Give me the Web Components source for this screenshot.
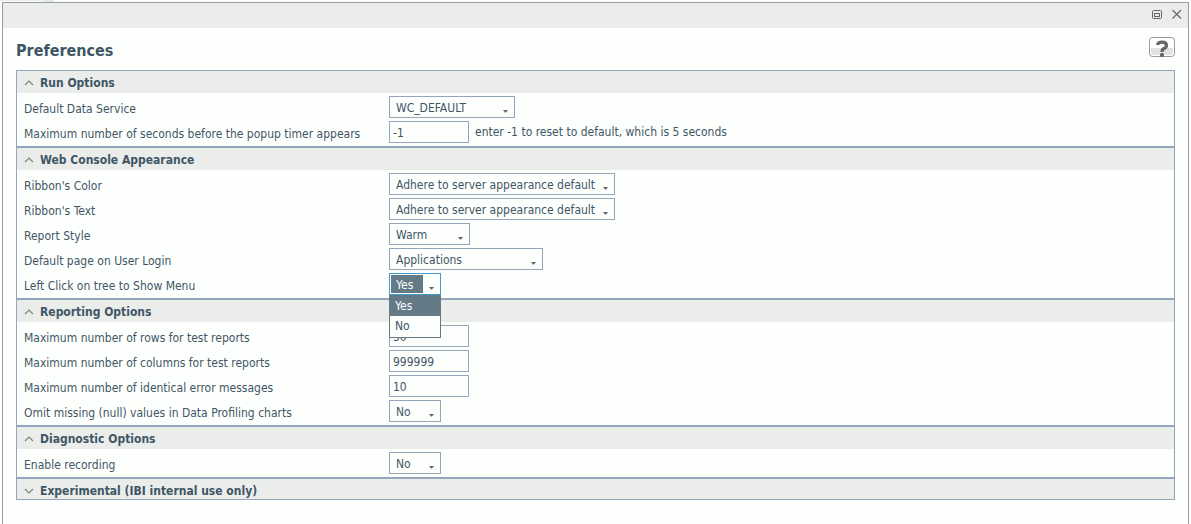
<!DOCTYPE html>
<html lang="en">
<head>
<meta charset="utf-8">
<title>Preferences</title>
<style>
  html { background: #fdfffc; }
  body {
    margin: 0;
    --ink: #3f5666;
    --line: #94a6bd;
    --paper: #fdfffc;
    --bar: #ebedeb;
    --accent: #647a87;
    font: 12px/16px "DejaVu Sans Condensed", "DejaVu Sans", sans-serif;
    color: var(--ink);
  }
</style>
</head>
<body>
<pref-window heading="Preferences">
  <pref-section heading="Run Options">
    <pref-field label="Default Data Service" options="WC_DEFAULT" style="--control-width:126px"></pref-field>
    <pref-field label="Maximum number of seconds before the popup timer appears" value="-1">enter -1 to reset to default, which is 5 seconds</pref-field>
  </pref-section>
  <pref-section heading="Web Console Appearance">
    <pref-field label="Ribbon's Color" options="Adhere to server appearance default" style="--control-width:226px"></pref-field>
    <pref-field label="Ribbon's Text" options="Adhere to server appearance default" style="--control-width:226px"></pref-field>
    <pref-field label="Report Style" options="Warm" style="--control-width:81px"></pref-field>
    <pref-field label="Default page on User Login" options="Applications" style="--control-width:154px"></pref-field>
    <pref-field label="Left Click on tree to Show Menu" options="Yes|No" open style="--control-width:52px"></pref-field>
  </pref-section>
  <pref-section heading="Reporting Options">
    <pref-field label="Maximum number of rows for test reports" value="50"></pref-field>
    <pref-field label="Maximum number of columns for test reports" value="999999"></pref-field>
    <pref-field label="Maximum number of identical error messages" value="10"></pref-field>
    <pref-field label="Omit missing (null) values in Data Profiling charts" options="No|Yes" style="--control-width:52px"></pref-field>
  </pref-section>
  <pref-section heading="Diagnostic Options">
    <pref-field label="Enable recording" options="No|Yes" style="--control-width:52px"></pref-field>
  </pref-section>
  <pref-section heading="Experimental (IBI internal use only)" collapsed></pref-section>
</pref-window>

<template id="window-template">
  <style>
    :host { display: block; }
    .behind { display: flex; height: 2px; }
    .behind i { width: 44px; background: linear-gradient(#ebedeb 1px, transparent 1px); }
    .behind b { width: 10px; background: #e3e9ee; }
    .frame { margin: 0 2px; border: 1px solid #999c9a; border-bottom: 0; min-height: calc(100vh - 2px); box-sizing: border-box; background: var(--paper); }
    .bar { display: flex; justify-content: flex-end; align-items: center; gap: 8px; height: 25px; padding: 0 6px 2px 0; box-sizing: border-box; background: var(--bar); }
    button { padding: 0; border: 0; background: none; font: inherit; color: inherit; }
    svg { display: block; }
    .top { display: flex; justify-content: space-between; align-items: flex-start; height: 33px; padding: 9px 13px 0; }
    h1 { margin: 0; font-size: 16px; line-height: 28px; font-weight: bold; }
    .sections { margin: 0 13px; border: 1px solid var(--line); }
  </style>
  <div class="behind"><i></i><b></b></div>
  <div class="frame">
    <div class="bar">
      <button aria-label="Restore"><svg width="12" height="12" viewBox="0 0 12 12" fill="none" stroke="#666"><rect x="1.500" y="1.500" width="9" height="8" rx="1"/><rect x="3.500" y="4.500" width="5" height="3"/></svg></button>
      <button aria-label="Close"><svg width="11" height="11" viewBox="0 0 11 11" fill="none" stroke="#666" stroke-width="1.200"><path d="M1.500 1l8.500 8.500M10 1l-8.500 8.500"/></svg></button>
    </div>
    <div class="top">
      <h1></h1>
      <button class="help" aria-label="Help"><svg width="26" height="20" viewBox="0 0 26 20"><rect x=".5" y=".5" width="25" height="19" rx="3" fill="#fdfffc" stroke="#999"/><path d="M2 11h22v5q0 2-2 2H4q-2 0-2-2z" fill="#e2e3e2"/><path d="M8.500 8Q9 5.200 13 5.200Q17.500 5.200 17.500 8.500Q17.500 10.500 15 11.500Q13 12.300 13 15" fill="none" stroke="#666" stroke-width="3.200"/><rect x="11" y="16" width="4" height="4" rx="1.500" fill="#666"/></svg></button>
    </div>
    <div class="sections"><slot></slot></div>
  </div>
</template>

<template id="section-template">
  <style>
    :host { display: block; }
    :host(:not(:first-child)) { border-top: 2px solid var(--line); }
    h2 { margin: 0; font: inherit; font-weight: bold; background: var(--bar); }
    button { display: flex; align-items: center; gap: 6px; box-sizing: border-box; width: 100%; height: 22px; padding: 2px 7px 0; border: 0; background: none; font: inherit; color: inherit; text-align: left; }
    svg { flex: none; }
    .rows { display: grid; gap: 3px; padding: 3px 7px; }
    :host([collapsed]) button { height: 20px; padding-top: 3px; }
    :host([collapsed]) .rows { display: none; }
    :host([collapsed]) path { transform: scaleY(-1); transform-origin: 5px 5px; }
  </style>
  <h2><button><svg width="10" height="10" viewBox="0 0 10 10" fill="none" stroke="#808080" stroke-width="1.200"><path d="M1 7L5 3L9 7"/></svg><span></span></button></h2>
  <div class="rows"><slot></slot></div>
</template>

<template id="field-template">
  <style>
    :host { display: grid; grid-template-columns: 365px 1fr; height: 22px; }
    label { padding-top: 5px; }
    .cell { display: flex; align-items: center; gap: 6px; }
    .box { position: relative; display: flex; }
    input, select { box-sizing: border-box; height: 22px; margin: 0; border: 1px solid var(--line); border-radius: 0; background: var(--paper); font: inherit; color: inherit; outline: 0; }
    input { width: 80px; padding: 2px 3px 0; }
    select {
      appearance: none; width: var(--control-width); padding: 2px 0 0 6px;
      background: url("data:image/svg+xml,%3Csvg xmlns='http://www.w3.org/2000/svg' width='5' height='3'%3E%3Cpath d='M0 0h5L3 2.500H2z' fill='%23666'/%3E%3C/svg%3E") no-repeat right 6px top 13px var(--paper);
    }
    :host([open]) select {
      border-color: #3f9ccb; color: #fff;
      background-image: url("data:image/svg+xml,%3Csvg xmlns='http://www.w3.org/2000/svg' width='5' height='3'%3E%3Cpath d='M0 0h5L3 2.500H2z' fill='%23666'/%3E%3C/svg%3E"), linear-gradient(#647a87, #647a87);
      background-repeat: no-repeat; background-position: right 6px top 13px, 1px 1px; background-size: auto, 32px 18px;
    }
    ul { position: absolute; z-index: 1; top: 100%; left: 0; right: 0; margin: 0; padding: 0; border: 1px solid var(--accent); background: var(--paper); list-style: none; }
    li { padding: 3px 5px 2px; line-height: 15px; }
    li:last-child { padding-bottom: 3px; }
    li[aria-selected=true] { background: var(--accent); color: #fff; }
  </style>
  <label for="control"></label>
  <div class="cell"><div class="box"></div><span><slot></slot></span></div>
</template>

<script>
  class PrefElement extends HTMLElement {
    stamp(id) {
      const root = this.attachShadow({ mode: "open" });
      root.append(document.getElementById(id).content.cloneNode(true));
      return root;
    }
  }

  customElements.define("pref-window", class extends PrefElement {
    connectedCallback() {
      this.stamp("window-template").querySelector("h1").textContent = this.getAttribute("heading");
    }
  });

  customElements.define("pref-section", class extends PrefElement {
    connectedCallback() {
      const root = this.stamp("section-template");
      const button = root.querySelector("button");
      root.querySelector("span").textContent = this.getAttribute("heading");
      button.setAttribute("aria-expanded", !this.hasAttribute("collapsed"));
      button.onclick = () => button.setAttribute("aria-expanded", !this.toggleAttribute("collapsed"));
    }
  });

  customElements.define("pref-field", class extends PrefElement {
    connectedCallback() {
      const root = this.stamp("field-template");
      const box = root.querySelector(".box");
      root.querySelector("label").textContent = this.getAttribute("label");
      const options = this.getAttribute("options");
      const control = document.createElement(options ? "select" : "input");
      control.id = "control";
      box.append(control);
      if (!options) {
        control.type = "text";
        control.value = this.getAttribute("value");
        return;
      }
      const names = options.split("|");
      names.forEach(name => control.add(new Option(name)));
      if (this.hasAttribute("open")) {
        const list = document.createElement("ul");
        list.setAttribute("role", "listbox");
        names.forEach((name, i) => {
          const item = document.createElement("li");
          item.setAttribute("role", "option");
          item.setAttribute("aria-selected", i === 0);
          item.textContent = name;
          list.append(item);
        });
        box.append(list);
      }
    }
  });
</script>
</body>
</html>
